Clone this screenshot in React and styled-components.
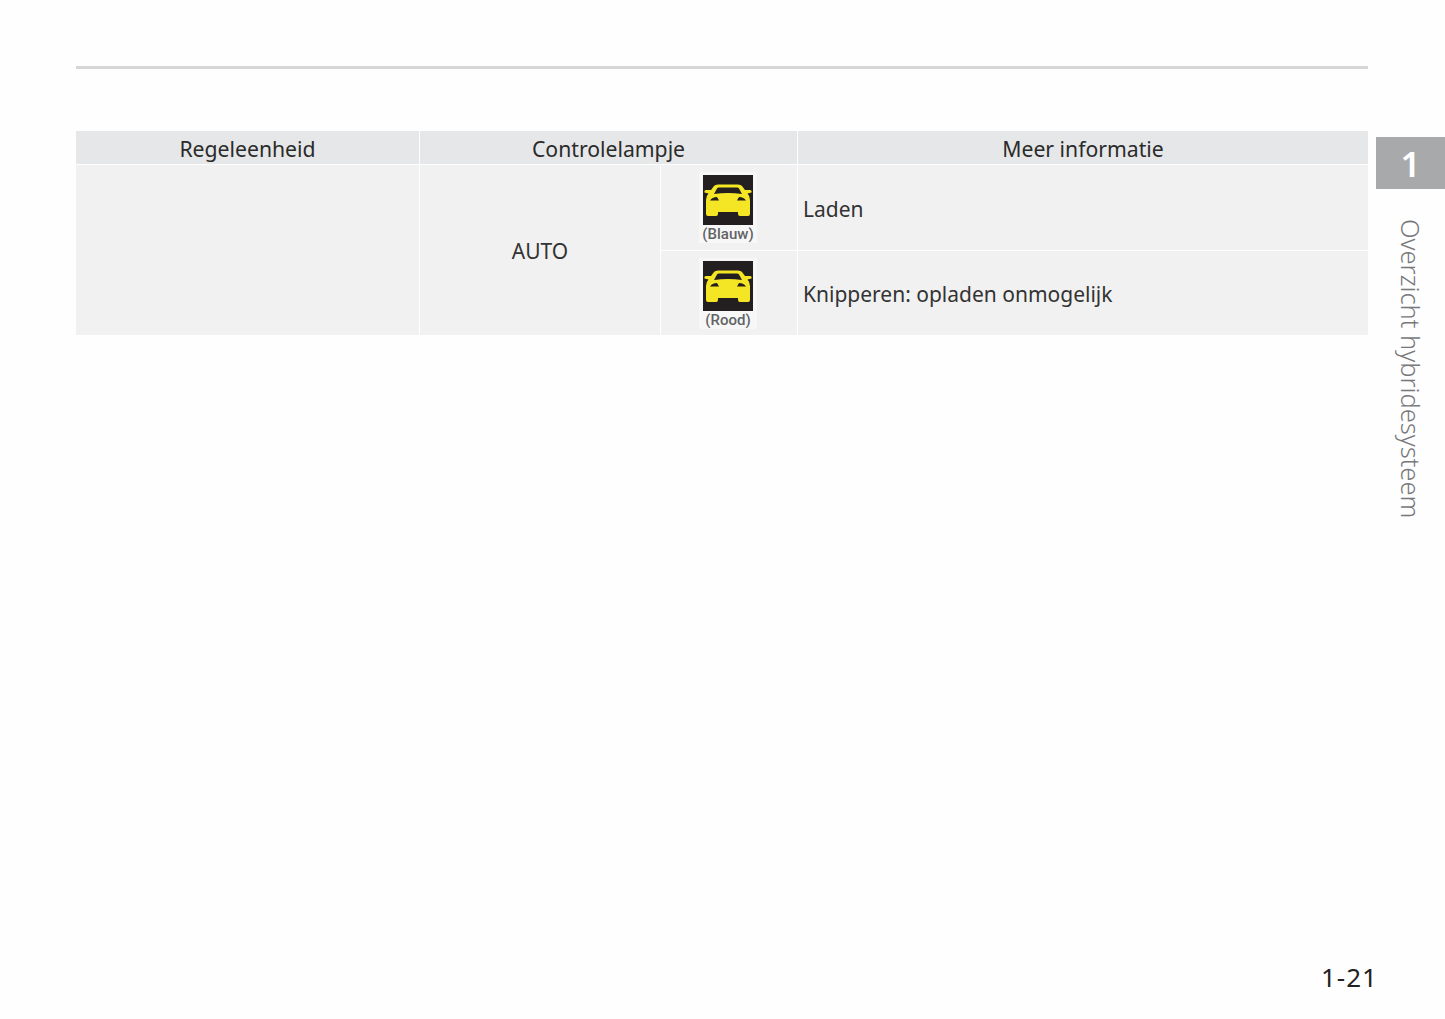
import React from 'react';
import styled, { createGlobalStyle } from 'styled-components';

const GlobalStyle = createGlobalStyle`
  html, body {
    margin: 0;
    padding: 0;
    background: #fefefe;
  }
`;

const Page = styled.div`
  display: flex;
  width: 1445px;
  height: 1019px;
  overflow: hidden;
  font-family: "Noto Sans", "Liberation Sans", sans-serif;
  color: #333;
`;

const Main = styled.main`
  width: 1292px;
  margin-left: 76px;
  padding-top: 66px;
  display: flex;
  flex-direction: column;
`;

const TopRule = styled.hr`
  margin: 0 0 62px;
  border: none;
  height: 3px;
  background: #d6d6d6;
`;

const Table = styled.div`
  display: grid;
  grid-template-columns: 343px 240px 136px 1fr;
  grid-template-rows: 33px 85px 84px;
  gap: 1px;
`;

const HeadCell = styled.div`
  grid-column: ${({ $span }) => ($span ? `span ${$span}` : 'auto')};
  display: flex;
  align-items: center;
  justify-content: center;
  padding-top: 2px;
  background: #e6e7e8;
  font-size: 21.2px;
  color: #2b2b2b;
`;

const BodyCell = styled.div`
  grid-row: ${({ $rows }) => ($rows ? `span ${$rows}` : 'auto')};
  display: flex;
  align-items: center;
  justify-content: ${({ $left }) => ($left ? 'flex-start' : 'center')};
  padding-left: ${({ $left }) => ($left ? '5px' : '0')};
  padding-top: ${({ $text }) => ($text ? '2px' : '0')};
  background: #f1f1f1;
  font-size: 21px;
`;

const Lamp = styled.div`
  display: flex;
  flex-direction: column;
  align-items: center;
  width: 58px;
  margin-right: 2px;
  padding-top: 3px;
  background: #f7f7f7;
`;

const LampBox = styled.svg`
  display: block;
  width: 50px;
  height: 50px;
`;

const LampLabel = styled.span`
  font-family: Roboto, "Liberation Sans", sans-serif;
  font-size: 15px;
  font-weight: 500;
  line-height: 18px;
  color: #626365;
`;

const Side = styled.aside`
  width: 69px;
  margin-left: 8px;
  padding-top: 137px;
  display: flex;
  flex-direction: column;
  align-items: center;
`;

const ChapterTab = styled.div`
  width: 100%;
  height: 52px;
  display: flex;
  align-items: center;
  justify-content: center;
  background: #a8a9ab;
  color: #fff;
  font-size: 35px;
  font-weight: 600;
`;

const ChapterTitle = styled.div`
  margin-top: 30px;
  writing-mode: vertical-rl;
  font-size: 25.5px;
  font-weight: 300;
  line-height: 30px;
  color: #77787a;
`;

const PageNumber = styled.div`
  position: absolute;
  left: 1321px;
  top: 959px;
  font-size: 26px;
  letter-spacing: 1px;
  color: #222;
`;

const CarLamp = ({ label }) => (
  <Lamp>
    <LampBox viewBox="0 0 50 50">
      <rect width="50" height="50" fill="#231f20" />
      <path
        fill="#f5e625"
        d="M11 11 Q12 9.500 15 9.500 H35 Q38 9.500 39 11 L42 15 H47 Q49 15 48.500 17.500 L44.500 18.500 Q47 21 47 25 V39 Q47 41 45 41 H37 Q35 41 35 39 V37 H15 V39 Q15 41 13 41 H5 Q3 41 3 39 V25 Q3 21 5.500 18.500 L1.500 17.500 Q1 15 3 15 H8 Z"
      />
      <path fill="#231f20" d="M11 19 L14 13.500 Q14.500 12.500 16 12.500 H34 Q35.500 12.500 36 13.500 L39 19 Q25 17 11 19 Z" />
      <path fill="#231f20" d="M7 25.500 Q9 22 14 22 L16 25.500 Z M43 25.500 Q41 22 36 22 L34 25.500 Z" />
    </LampBox>
    <LampLabel>{label}</LampLabel>
  </Lamp>
);

const App = () => (
  <>
    <GlobalStyle />
    <Page>
      <Main>
        <TopRule />
        <Table>
          <HeadCell>Regeleenheid</HeadCell>
          <HeadCell $span={2}>Controlelampje</HeadCell>
          <HeadCell>Meer informatie</HeadCell>
          <BodyCell $rows={2} />
          <BodyCell $rows={2} $text>AUTO</BodyCell>
          <BodyCell><CarLamp label="(Blauw)" /></BodyCell>
          <BodyCell $left $text>Laden</BodyCell>
          <BodyCell><CarLamp label="(Rood)" /></BodyCell>
          <BodyCell $left $text>Knipperen: opladen onmogelijk</BodyCell>
        </Table>
      </Main>
      <Side>
        <ChapterTab>1</ChapterTab>
        <ChapterTitle>Overzicht hybridesysteem</ChapterTitle>
      </Side>
      <PageNumber>1-21</PageNumber>
    </Page>
  </>
);

export default App;
